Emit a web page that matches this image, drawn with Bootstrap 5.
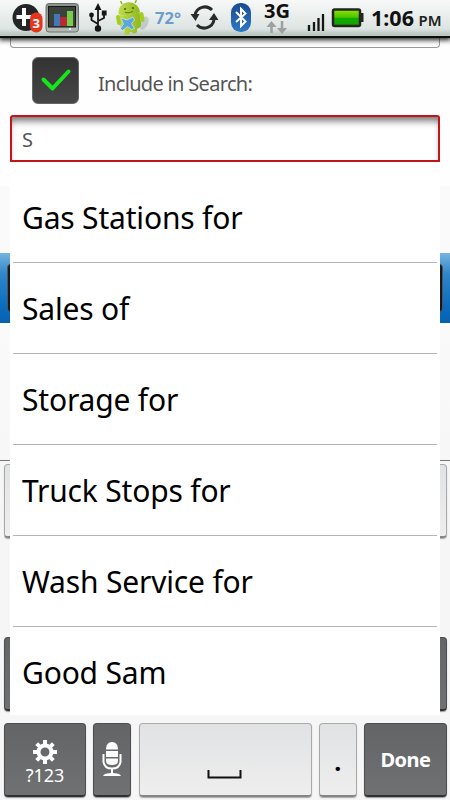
<!DOCTYPE html>
<html lang="en">
<head>
<meta charset="utf-8">
<meta name="viewport" content="width=device-width, initial-scale=1">
<title>Include in Search</title>
<link href="https://cdn.jsdelivr.net/npm/bootstrap@5.3.0/dist/css/bootstrap.min.css" rel="stylesheet">
<style>
body{font-family:"Noto Sans","Open Sans",sans-serif;background:#fefefe;line-height:1}
.screen{width:450px;height:800px}
.statusbar{height:38px;background:linear-gradient(#f7f9f8,#dde4e1 80%,#bcc9c3 94%);border-bottom:2px solid #0a0f0c;box-shadow:0 1px 5px 1px #222;z-index:3}
.statusbar svg{display:block;overflow:visible}
.form-top{height:10px;margin:0 10px;border:1px solid #999;border-top:0;border-radius:0 0 4px 4px}
.check-row{margin-top:9px}
.tick{width:47px;height:47px;border-radius:6px;background:linear-gradient(#333,#474747);border:1px solid #666;margin-left:32px}
.lbl{font-size:20px;letter-spacing:-.68px;color:#555;margin-left:19px;padding-top:6px}
.query{height:47px;margin:11px 10px 0;border:2px solid #c3141b;border-radius:3px 3px 0 0;box-shadow:inset 0 7px 7px -3px #777;color:#555;font-size:20px;padding:3px 0 0 10px;background:#fff}
.behind-a{height:67px;margin-top:24px;background:#fafafa}
.behind-b{height:70px;background:linear-gradient(#78b4e0,#2f86ca 30%,#0b6dc0 75%,#0860ae)}
.dark-btn{height:50px;margin:0 7px;border-radius:5px;background:#191919;border:1px solid #4a5560}
.behind-c{height:137px;background:linear-gradient(#fafafa,#f7f7f7)}
.keyboard{height:340px;border-top:1px solid #777;background:#f6f6f6;padding:3px 3px 3px 4px}
.key{height:74px;border-radius:4px;font-size:20px}
.key-light{background:linear-gradient(#e1e2e4,#eee);border:1px solid #aaa;border-bottom:2px solid #858585;box-shadow:0 1px 1px #aaa;color:#000}
.key-dark{background:linear-gradient(#636466,#707173);border:1px solid #4d4e50;border-bottom:2px solid #303133;box-shadow:0 1px 1px #999;color:#fff}
.w-num{width:82px}.w-mic{width:38px}.w-space{width:173px}.w-dot{width:38px}.w-done{width:83px}
.suggest{left:10px;top:162px;width:430px;height:553px;background:#fff;padding:10px 3px 0;z-index:2}
.suggest .entry{height:91px;flex-shrink:0;border-bottom:1px solid #b5b5b5;font-size:30px;color:#000;padding:1px 0 0 9px;letter-spacing:-.18px;white-space:nowrap}
.suggest .entry:last-child{border-bottom:0}
.num-text{font-size:18px;letter-spacing:-.1px;margin-top:2px}
.dot-text{font-size:25px;font-weight:700;padding-top:4px}
.done-text{font-size:20px;font-weight:700;letter-spacing:-.5px;padding-top:1px}
</style>
<script src="https://cdn.jsdelivr.net/npm/bootstrap@5.3.0/dist/js/bootstrap.bundle.min.js"></script>
</head>
<body>
<div class="screen d-flex flex-column position-relative overflow-hidden">
<header class="statusbar position-relative flex-shrink-0">
<svg width="450" height="36" viewBox="0 0 450 36" font-family="Noto Sans,sans-serif">
<defs>
<linearGradient id="bat" x2="0" y2="1"><stop stop-color="#8ee600"/><stop offset=".48" stop-color="#4ac400"/><stop offset=".5" stop-color="#16ac00"/><stop offset="1" stop-color="#10a000"/></linearGradient>
<linearGradient id="blu" x2="0" y2="1"><stop stop-color="#184b90"/><stop offset="1" stop-color="#2f78c8"/></linearGradient>
<linearGradient id="mon" x2="0" y2="1"><stop stop-color="#8b908c"/><stop offset="1" stop-color="#b5bab5"/></linearGradient>
<linearGradient id="rob"><stop stop-color="#bfdc4a"/><stop offset="1" stop-color="#8fb71b"/></linearGradient>
</defs>
<!-- add badge -->
<circle cx="26" cy="17.500" r="13.500" fill="#242526"/>
<path d="M24 8v18M16.500 17h15" stroke="#fff" stroke-width="4"/>
<rect x="30" y="12.500" width="12.500" height="20" rx="6" fill="#e3361c"/>
<text x="36.300" y="27.500" font-size="13" font-weight="700" fill="#fff" text-anchor="middle">3</text>
<!-- monitor -->
<rect x="46" y="3.500" width="32.500" height="28.500" rx="3" fill="url(#mon)" stroke="#6d716e"/>
<rect x="48.500" y="6.500" width="27" height="20.500" fill="#3b423c" stroke="#151815"/>
<path d="M54 14h6v12h-6z" fill="#4477b8"/><path d="M60 17h7v9h-7z" fill="#b82932"/><path d="M67 11h6v15h-6z" fill="#77ce49"/>
<circle cx="70" cy="29" r="1" fill="#fff"/>
<!-- usb -->
<g fill="#161616" stroke="#161616" stroke-width="1.800"><path d="M98 8v19M98 24l-6.500-4v-4M98 21l6-3v-4" fill="none"/><path d="M98 5l2 4h-4z"/><circle cx="98" cy="28.500" r="2.300"/><circle cx="91.500" cy="15" r="1.500"/><path d="M102.700 11.500h3v3h-3z"/></g>
<!-- robot -->
<ellipse cx="144" cy="23" rx="4" ry="7" fill="#8a9290" opacity=".35" transform="rotate(25 144 23)"/>
<path d="M122 4l-1.500-3M135 3l1.500-3" stroke="#91b51b" stroke-width="1.500"/>
<path d="M118.500 14.500C117-1 138-2 140 12Q130 17 118.500 14.500z" fill="url(#rob)"/>
<path d="M119.500 15q10 1 20-3l1.500 12q0 4-4 5v3q-3 3-5.500 0h-2v2q-3 2-5 0v-4q-4-1-5-6z" fill="url(#rob)"/>
<path d="M118 17l1 6M141.500 14l1 6" stroke="#a5cc25" stroke-width="4" stroke-linecap="round"/>
<circle cx="125" cy="9" r="1" fill="#485c13"/><circle cx="133" cy="8" r="1" fill="#485c13"/><path d="M125 12.500q4 1 8-1" fill="none" stroke="#60791c"/>
<path d="M121 18l6 2 6-3 1.500 3-3 3.500 3 5-3 1-4-3-5 4-2-2 3-4.500z" fill="#5da5df" stroke="#d0e8ef" stroke-width=".7"/>
<text x="155" y="24" font-size="16.500" font-weight="700" fill="#6b9cce" textLength="26" lengthAdjust="spacingAndGlyphs">72°</text>
<!-- sync -->
<g fill="none" stroke="#292b2a" stroke-width="3"><path d="M195 15a10 10 0 0 1 17-5"/><path d="M214 20a10 10 0 0 1-17 5"/></g>
<path d="M190.500 14h9l-4 7zM209 20h9.500l-4.500-7z" fill="#292b2a"/>
<!-- bluetooth -->
<rect x="231" y="3" width="20" height="29" rx="9.500" fill="url(#blu)"/>
<path d="M236 12l9.500 9.500-4.500 4.500V9l4.500 4.500L236 22" fill="none" stroke="#fff" stroke-width="2"/>
<text x="264" y="17.500" font-size="20" font-weight="700" fill="#111" textLength="26" lengthAdjust="spacingAndGlyphs">3G</text>
<path d="M271.500 33V25M282 21v8" stroke="#9ba19e" stroke-width="2.500"/><path d="M266.500 27h10l-5-6zM277 28h10l-5 6z" fill="#9ba19e"/>
<!-- signal and battery -->
<path d="M309 25v6M314 22v9M318.500 18v13M323 14v17" stroke="#151616" stroke-width="2.300"/>
<rect x="333" y="9.500" width="27" height="16.500" rx="1.500" fill="url(#bat)" stroke="#242522" stroke-width="2.500"/><path d="M361 13h2.500v9H361z" fill="#242522"/>
<text x="371" y="25.500" font-size="21.500" font-weight="700" fill="#101111" textLength="43" lengthAdjust="spacingAndGlyphs">1:06</text>
<text x="418.500" y="25.500" font-size="14.500" font-weight="600" fill="#202121" textLength="23" lengthAdjust="spacingAndGlyphs">PM</text>
</svg>
</header>
<div class="form-top flex-shrink-0"></div>
<section class="check-row d-flex align-items-center flex-shrink-0">
<div class="tick d-flex align-items-center justify-content-center"><svg width="45" height="45" viewBox="0 0 45 45"><path d="M10.500 21.500l9 9L35.500 13.500" fill="none" stroke="#16e71b" stroke-width="4" stroke-linecap="round" stroke-linejoin="round"/></svg></div>
<div class="lbl">Include in Search:</div>
</section>
<div class="query d-flex align-items-center flex-shrink-0">S</div>
<div class="behind-a flex-shrink-0"></div>
<div class="behind-b flex-shrink-0 d-flex flex-column justify-content-center"><div class="dark-btn"></div></div>
<div class="behind-c flex-shrink-0"></div>
<div class="keyboard flex-shrink-0 d-flex flex-column justify-content-between">
<div class="key key-light"></div>
<div class="key key-light mx-4"></div>
<div class="key key-dark"></div>
<div class="d-flex justify-content-between">
<div class="key key-dark w-num d-flex flex-column align-items-center">
<svg class="mt-3 flex-shrink-0" width="24" height="24" viewBox="-12 -12 24 24"><g fill="none" stroke="#fff"><circle r="6.500" stroke-width="4"/><path stroke-width="4" d="M0-12v5M0 7v5M-12 0h5M7 0h5M-8.300-8.300l3.500 3.500M4.800 4.800l3.500 3.500M-8.300 8.300l3.500-3.500M4.800-4.800l3.500-3.500"/></g></svg>
<span class="num-text">?123</span></div>
<div class="key key-dark w-mic d-flex align-items-center justify-content-center"><svg width="20" height="36" viewBox="0 0 20 36"><path d="M4 8.500Q4 1 10 1t6 7.500zM4 10h12v6H4zM4 17.500h12V20q0 4-6 4t-6-4z" fill="#fff"/><path d="M1.500 13v8q1 6.500 8.500 6.500t8.500-6.500v-8M10 28v5" fill="none" stroke="#fff" stroke-width="2"/><path d="M1 35q1-3 9-3t9 3z" fill="#fff"/></svg></div>
<div class="key key-light w-space d-flex align-items-end justify-content-center"><svg width="36" height="26" viewBox="0 0 36 26"><path d="M1.500 1v7.500h32V1" fill="none" stroke="#111" stroke-width="2"/></svg></div>
<div class="key key-light w-dot d-flex align-items-center justify-content-center"><span class="dot-text">.</span></div>
<div class="key key-dark w-done d-flex align-items-center justify-content-center"><span class="done-text">Done</span></div>
</div>
</div>
<div class="suggest position-absolute d-flex flex-column">
<div class="entry d-flex align-items-center">Gas Stations for</div>
<div class="entry d-flex align-items-center">Sales of</div>
<div class="entry d-flex align-items-center">Storage for</div>
<div class="entry d-flex align-items-center">Truck Stops for</div>
<div class="entry d-flex align-items-center">Wash Service for</div>
<div class="entry d-flex align-items-center">Good Sam</div>
</div>
</div>
</body>
</html>
